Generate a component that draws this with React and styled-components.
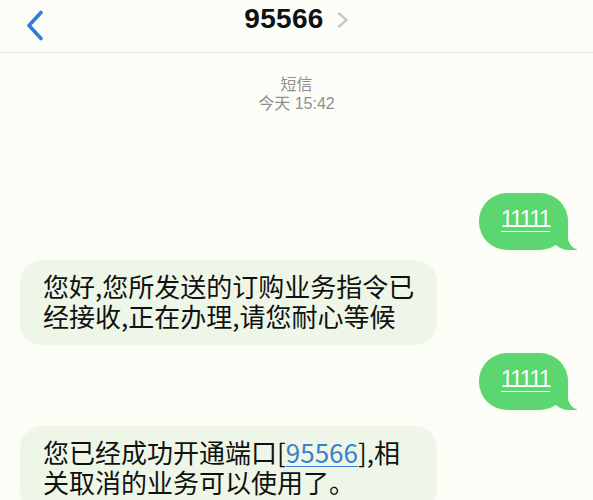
import React from 'react'
import styled, { createGlobalStyle, css } from 'styled-components'

const PAGE_BG = '#fcfdf7'
const GREEN = '#5bd670'

const GlobalStyle = createGlobalStyle`
  html, body {
    margin: 0;
    padding: 0;
    background: ${PAGE_BG};
  }
  body {
    font-family: "Noto Sans CJK SC", "Noto Sans", sans-serif;
    -webkit-font-smoothing: antialiased;
  }
`

const Screen = styled.div`
  width: 593px;
  height: 500px;
  overflow: hidden;
  background: ${PAGE_BG};
`

const Header = styled.header`
  height: 52px;
  display: grid;
  grid-template-columns: 1fr auto 1fr;
  align-items: start;
  border-bottom: 1px solid #e3e4df;
`

const BackButton = styled.button`
  justify-self: start;
  margin: 10px 0 0 26px;
  padding: 0;
  border: 0;
  background: none;
  display: flex;
  cursor: pointer;
`

const TitleGroup = styled.div`
  display: flex;
  align-items: flex-start;
  padding-top: 3px;
`

const Title = styled.h1`
  margin: 0;
  font-family: "Liberation Sans", Arial, sans-serif;
  font-size: 28px;
  line-height: 32px;
  font-weight: 700;
  letter-spacing: 0.3px;
  color: #111;
`

const Disclosure = styled.span`
  display: flex;
  margin: 9px 0 0 13px;
`

const Stamp = styled.div`
  padding-top: 22px;
  text-align: center;
  color: #8e8e93;
  font-family: "Liberation Sans", "Noto Sans CJK SC", sans-serif;
  font-size: 16px;
  line-height: 19px;
`

const Thread = styled.div`
  display: flex;
  flex-direction: column;
  padding: 0 25px 0 20px;
`

const outgoing = css`
  padding: 13px 18px 17px 22px;
  font-family: "Liberation Sans", Arial, sans-serif;
  font-size: 23px;
  line-height: 27px;
  letter-spacing: -1.6px;

  &::before {
    content: '';
    position: absolute;
    right: -9px;
    bottom: 0;
    width: 26px;
    height: 26px;
    background: ${GREEN};
    border-bottom-left-radius: 18px 16px;
  }

  &::after {
    content: '';
    position: absolute;
    right: -30px;
    bottom: 0;
    width: 30px;
    height: 28px;
    background: ${PAGE_BG};
    border-bottom-left-radius: 13px;
  }
`

const incoming = css`
  max-width: 417px;
  padding: 11px 20px 14px 23px;
  font-size: 26px;
  line-height: 30px;
`

const Bubble = styled.div`
  position: relative;
  box-sizing: border-box;
  align-self: ${p => (p.$out ? 'flex-end' : 'flex-start')};
  margin-top: ${p => p.$space}px;
  border-radius: ${p => (p.$out ? '28px' : '22px')};
  background: ${p => (p.$out ? GREEN : '#eef7e7')};
  color: ${p => (p.$out ? '#fff' : '#111')};
  ${p => (p.$out ? outgoing : incoming)}
`

const Body = styled.span`
  position: relative;
  z-index: 1;
`

const Underlined = styled.span`
  text-decoration: underline;
  text-decoration-thickness: 1px;
  text-underline-offset: 4px;
`

const Link = styled.a`
  color: #3a80d2;
  text-decoration: underline;
  text-decoration-thickness: 1px;
  text-underline-offset: 3px;
`

const BackIcon = () => (
  <svg width="18" height="31" viewBox="0 0 18 31" fill="none">
    <path
      d="M15 2.5 L3 15.5 L15 28.5"
      stroke="#2f7ddb"
      strokeWidth="3.6"
      strokeLinecap="round"
      strokeLinejoin="round"
    />
  </svg>
)

const ChevronIcon = () => (
  <svg width="12" height="16" viewBox="0 0 12 16" fill="none">
    <path
      d="M2 1.5 L9.5 8 L2 14.5"
      stroke="#c9c9cc"
      strokeWidth="2.4"
      strokeLinecap="round"
      strokeLinejoin="round"
    />
  </svg>
)

const messages = [
  { id: 1, out: true, space: 80, text: <Underlined>11111</Underlined> },
  { id: 2, out: false, space: 10, text: '您好,您所发送的订购业务指令已经接收,正在办理,请您耐心等候' },
  { id: 3, out: true, space: 8, text: <Underlined>11111</Underlined> },
  {
    id: 4,
    out: false,
    space: 16,
    text: (
      <>
        您已经成功开通端口[<Link href="#">95566</Link>],相关取消的业务可以使用了。
      </>
    ),
  },
]

export default function App() {
  return (
    <Screen>
      <GlobalStyle />
      <Header>
        <BackButton aria-label="返回">
          <BackIcon />
        </BackButton>
        <TitleGroup>
          <Title>95566</Title>
          <Disclosure>
            <ChevronIcon />
          </Disclosure>
        </TitleGroup>
        <div />
      </Header>
      <Stamp>
        <div>短信</div>
        <div>今天 15:42</div>
      </Stamp>
      <Thread>
        {messages.map(m => (
          <Bubble key={m.id} $out={m.out} $space={m.space}>
            <Body>{m.text}</Body>
          </Bubble>
        ))}
      </Thread>
    </Screen>
  )
}
